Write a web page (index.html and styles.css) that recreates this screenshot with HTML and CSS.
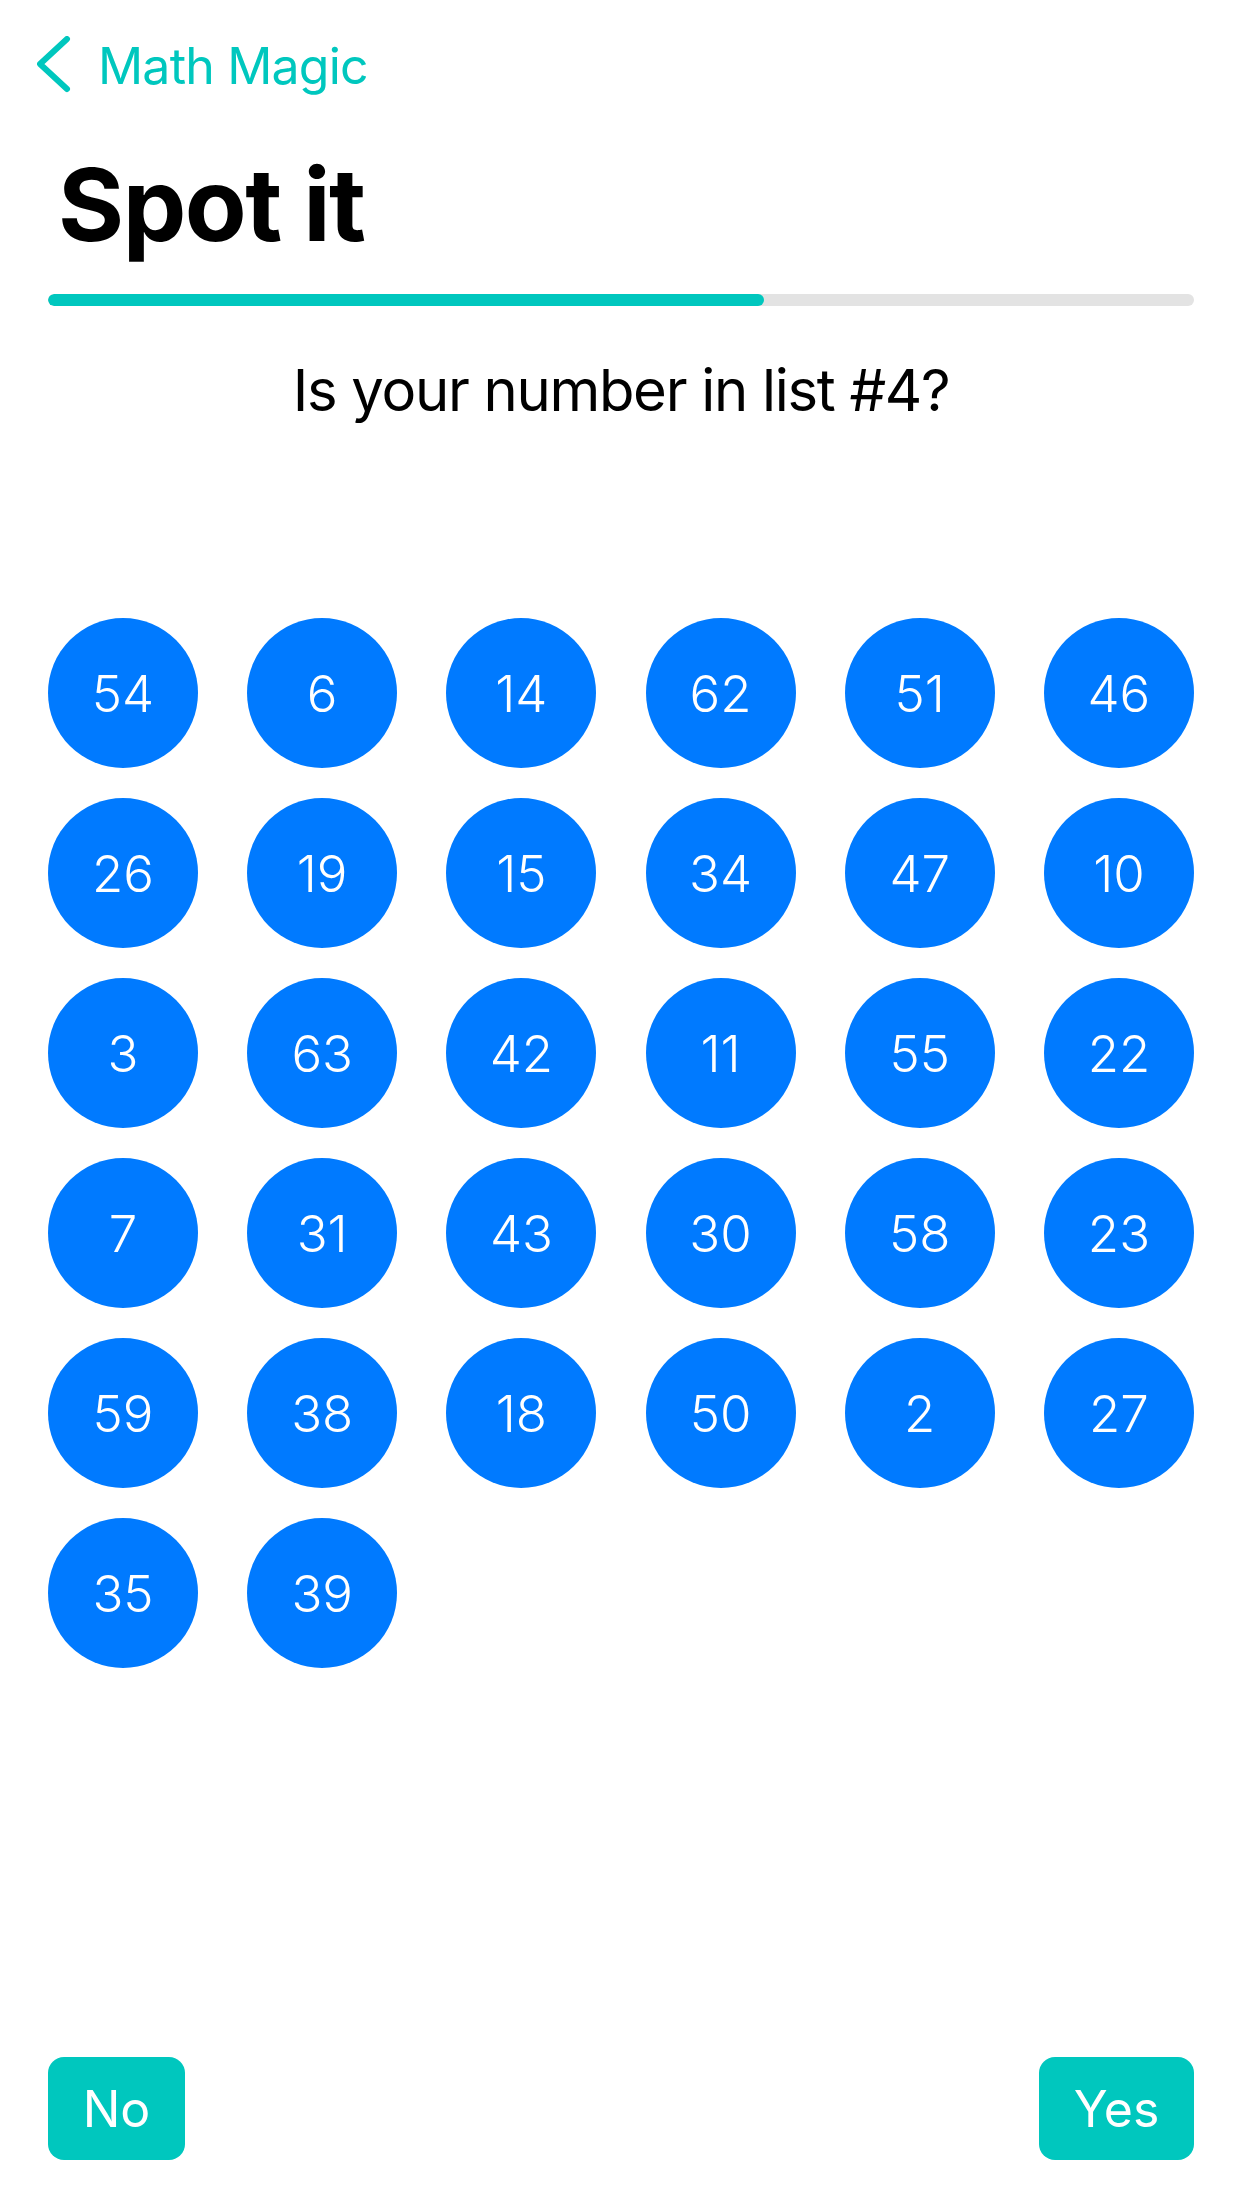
FILE: index.html
```html
<!DOCTYPE html>
<html>

<head>
	<meta http-equiv="Content-Type" content="text/html; charset=UTF-8">
	<title>Spot it</title>
	<link rel="stylesheet" href="styles.css">
</head>

<body>
	<div class="page">
		<div class="nav">
			<svg class="nav-back" width="36" height="60" viewBox="0 0 36 60">
				<polyline points="30,3 3,28 30,53" fill="none" stroke="#00C7BE" stroke-width="6"
					stroke-linecap="round" stroke-linejoin="round" />
			</svg>
			<span class="nav-title">Math Magic</span>
		</div>

		<div class="content">
			<h1 class="title">Spot it</h1>
			<div class="progress">
				<div class="progress-fill" style="width: 62.5%;"></div>
			</div>
			<p class="question">Is your number in list #4?</p>

			<div class="numbers">
				<div class="num">54</div>
				<div class="num">6</div>
				<div class="num">14</div>
				<div class="num">62</div>
				<div class="num">51</div>
				<div class="num">46</div>
				<div class="num">26</div>
				<div class="num">19</div>
				<div class="num">15</div>
				<div class="num">34</div>
				<div class="num">47</div>
				<div class="num">10</div>
				<div class="num">3</div>
				<div class="num">63</div>
				<div class="num">42</div>
				<div class="num">11</div>
				<div class="num">55</div>
				<div class="num">22</div>
				<div class="num">7</div>
				<div class="num">31</div>
				<div class="num">43</div>
				<div class="num">30</div>
				<div class="num">58</div>
				<div class="num">23</div>
				<div class="num">59</div>
				<div class="num">38</div>
				<div class="num">18</div>
				<div class="num">50</div>
				<div class="num">2</div>
				<div class="num">27</div>
				<div class="num">35</div>
				<div class="num">39</div>
			</div>
		</div>

		<div class="answers">
			<div class="btn btn-no">No</div>
			<div class="btn btn-yes">Yes</div>
		</div>
	</div>
</body>

</html>
```

FILE: styles.css
```css
* {
	margin: 0;
	padding: 0;
	box-sizing: border-box;
}

body {
	background: #fff;
	font-family: Inter, "Noto Sans", sans-serif;
	color: #000;
}

.page {
	min-height: 100vh;
	display: flex;
	flex-direction: column;
}

/* top bar */
.nav {
	height: 132px;
	padding-left: 37px;
	display: flex;
	align-items: center;
	gap: 25px;
}

.nav-back {
	display: block;
}

.nav-title {
	font-size: 50px;
	line-height: 60px;
	color: #00C7BE;
	letter-spacing: -0.8px;
}

.content {
	padding: 0 48px;
}

.title {
	margin-top: 12px;
	margin-left: 10px;
	font-size: 101px;
	line-height: 120px;
	font-weight: 700;
	letter-spacing: -1.5px;
}

.progress {
	margin-top: 30px;
	height: 12px;
	border-radius: 6px;
	background: #e3e3e3;
	overflow: hidden;
}

.progress-fill {
	height: 100%;
	border-radius: 6px;
	background: #00C7BE;
}

.question {
	margin-top: 44px;
	font-size: 58px;
	line-height: 80px;
	text-align: center;
	letter-spacing: -1.3px;
}

/* number grid */
.numbers {
	margin-top: 188px;
	display: grid;
	grid-template-columns: repeat(6, 150px);
	justify-content: space-between;
	row-gap: 30px;
}

.num {
	width: 150px;
	height: 150px;
	border-radius: 50%;
	background: #007AFF;
	color: #fff;
	font-size: 51px;
	font-weight: 300;
	display: flex;
	align-items: center;
	justify-content: center;
}

/* answer buttons */
.answers {
	margin-top: auto;
	padding: 0 48px 48px;
	display: flex;
	justify-content: space-between;
}

.btn {
	height: 103px;
	border-radius: 16px;
	background: #00C7BE;
	color: #fff;
	font-size: 50px;
	display: flex;
	align-items: center;
	justify-content: center;
}

.btn-no {
	width: 137px;
}

.btn-yes {
	width: 155px;
}
```
